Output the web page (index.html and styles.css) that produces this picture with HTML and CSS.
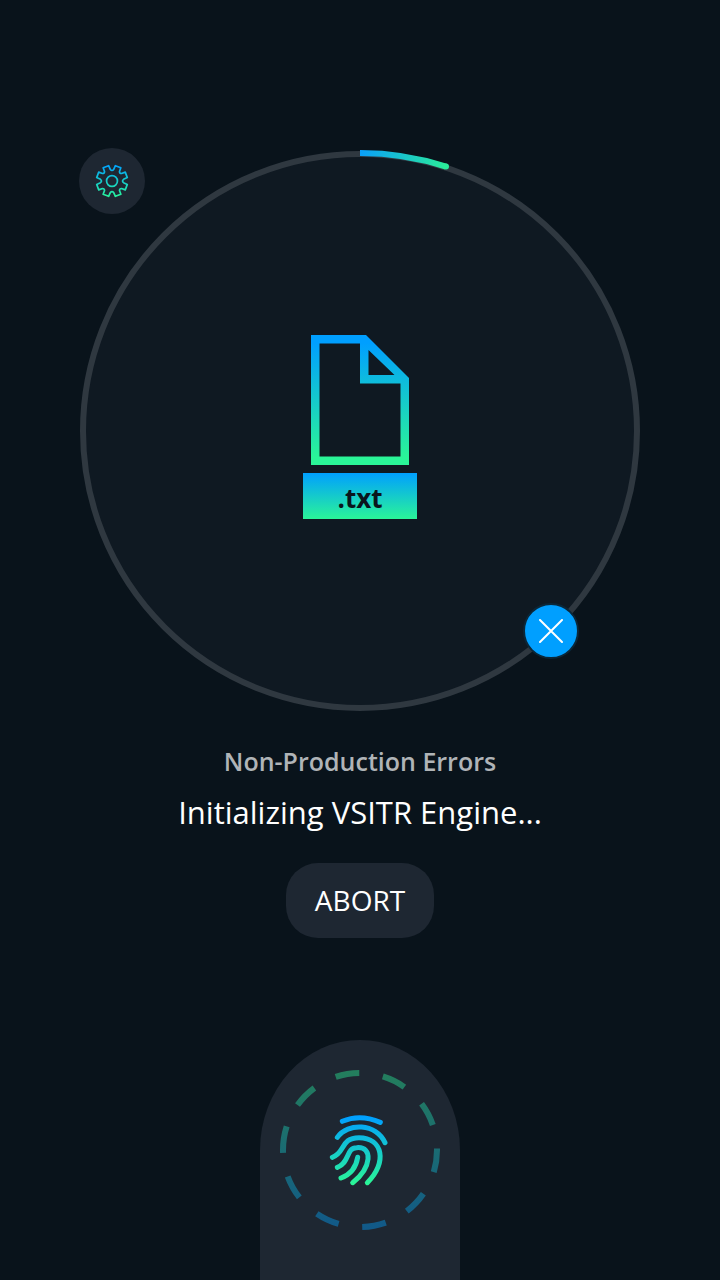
FILE: index.html
```html
<!DOCTYPE html>
<html lang="en">
<head>
<meta charset="utf-8">
<meta name="viewport" content="width=device-width, initial-scale=1">
<title>Non-Production Errors</title>
<link rel="stylesheet" href="styles.css">
</head>
<body>
<main class="screen">
  <section class="stage">
    <svg class="ring" viewBox="0 0 560 560" aria-hidden="true">
      <defs>
        <linearGradient id="arc" x1="280" y1="0" x2="366" y2="16" gradientUnits="userSpaceOnUse">
          <stop offset="0" stop-color="#0a9ffa"/><stop offset="1" stop-color="#2aec9a"/>
        </linearGradient>
      </defs>
      <circle cx="280" cy="280" r="277" fill="#0f1922" stroke="#2f3840" stroke-width="6"/>
      <path d="M280 2A278 278 0 0 1 366 15.6" fill="none" stroke="url(#arc)" stroke-width="6"/>
      <circle cx="366" cy="15.6" r="3" fill="#2aec9a"/>
    </svg>
    <div class="file">
      <svg class="file-icon" viewBox="0 0 98 130" aria-hidden="true">
        <defs>
          <linearGradient id="doc" x1="0" y1="8" x2="0" y2="122" gradientUnits="userSpaceOnUse">
            <stop offset="0" stop-color="#009fff"/><stop offset="1" stop-color="#2af598"/>
          </linearGradient>
        </defs>
        <path fill="url(#doc)" fill-rule="evenodd" d="M0 0H55L98 43V130H0ZM8.500 8.500V121.500H89.500V48.500H49V8.500ZM57.500 15V40H83.500Z"/>
      </svg>
      <span class="file-type">.txt</span>
    </div>
    <button class="settings" type="button" aria-label="Settings">
      <svg viewBox="0 0 100 100" width="34" height="34" aria-hidden="true">
        <defs>
          <linearGradient id="gear" x1="0" y1="0" x2="0" y2="100" gradientUnits="userSpaceOnUse">
            <stop offset="0" stop-color="#009fff"/><stop offset="1" stop-color="#2af598"/>
          </linearGradient>
        </defs>
        <g fill="none" stroke="url(#gear)" stroke-width="5" stroke-linejoin="round">
          <path d="M40 5L45 16Q50 22 55 16L60 5L76 11L72 22Q72 28 78 28L89 24L95 40L84 45Q78 50 84 55L95 60L89 76L78 72Q72 72 72 78L76 89L60 95L55 84Q50 78 45 84L40 95L24 89L28 78Q28 72 22 72L11 76L5 60L16 55Q22 50 16 45L5 40L11 24L22 28Q28 28 28 22L24 11Z"/>
          <circle cx="50" cy="50" r="16"/>
        </g>
      </svg>
    </button>
    <button class="remove" type="button" aria-label="Remove file">
      <svg viewBox="0 0 24 24" width="24" height="24" aria-hidden="true"><path d="M1 1L23 23M23 1L1 23" stroke="#fff" stroke-width="2" stroke-linecap="round"/></svg>
    </button>
  </section>
  <section class="status">
    <h1 class="title">Non-Production Errors</h1>
    <p class="message">Initializing VSITR Engine...</p>
    <button class="abort" type="button">ABORT</button>
  </section>
  <button class="dock" type="button" aria-label="Authenticate with fingerprint">
    <svg viewBox="0 0 160 160" width="160" height="160" aria-hidden="true">
      <defs>
        <linearGradient id="dash" x1="0" y1="3" x2="0" y2="157" gradientUnits="userSpaceOnUse">
          <stop offset="0" stop-color="#009fff"/><stop offset="1" stop-color="#2af598"/>
        </linearGradient>
        <linearGradient id="print" x1="0" y1="35" x2="0" y2="235" gradientUnits="userSpaceOnUse">
          <stop offset="0" stop-color="#009fff"/><stop offset="1" stop-color="#2af598"/>
        </linearGradient>
      </defs>
      <circle cx="80" cy="80" r="77" fill="none" stroke="url(#dash)" stroke-width="6" stroke-dasharray="24 24" opacity=".42" transform="rotate(180 80 80)"/>
      <g transform="translate(40 35) scale(.3333)" fill="none" stroke="url(#print)" stroke-width="15" stroke-linecap="round">
        <path d="M67 49Q120 26 181 52"/>
        <path d="M52 97C84 52 167 54 195 113"/>
        <path d="M37 157C76 145 61 98 117 98C189 98 203 173 142 233"/>
        <path d="M52 187C89 174 78 128 110 128C160 123 155 189 98 233"/>
        <path d="M63 219C89 209 108 190 113 157"/>
      </g>
    </svg>
  </button>
</main>
</body>
</html>
```
FILE: styles.css
```css
* { box-sizing: border-box; }

body {
  margin: 0;
  background: #09131b;
  color: #fff;
  font-family: "Open Sans", "Noto Sans", sans-serif;
}

button {
  padding: 0;
  border: 0;
  color: inherit;
  font: inherit;
  cursor: pointer;
}

svg { display: block; }

.screen {
  display: flex;
  flex-direction: column;
  align-items: center;
  min-height: 100vh;
  padding-top: 151px;
}

.stage {
  position: relative;
  display: grid;
  place-items: center;
  width: 78%;
  max-width: 560px;
}

.ring {
  grid-area: 1 / 1;
  width: 100%;
  overflow: visible;
}

.file {
  grid-area: 1 / 1;
  display: flex;
  flex-direction: column;
  align-items: center;
  gap: 8px;
  padding-bottom: 8px;
}

.file-icon { width: 98px; }

.file-type {
  padding: 4px 34px 0;
  background: linear-gradient(#009fff, #2af598);
  color: #0a151d;
  font-size: 26px;
  font-weight: 700;
  line-height: 42px;
}

.settings,
.remove {
  position: absolute;
  display: grid;
  place-items: center;
  border-radius: 50%;
}

.settings {
  top: -3px;
  left: -1px;
  width: 66px;
  height: 66px;
  background: #1e2732;
}

.remove {
  right: 61px;
  bottom: 52px;
  width: 56px;
  height: 56px;
  border: 2px solid #0b2739;
  background: #009fff;
}

.status {
  display: flex;
  flex-direction: column;
  align-items: center;
  padding: 32px 16px;
  text-align: center;
}

.title {
  margin: 0;
  color: #b0b4b7;
  font-size: 25px;
  font-weight: 600;
  line-height: 36px;
}

.message {
  margin: 10px 0 28px;
  font-size: 31px;
  line-height: 46px;
}

.abort {
  padding: 0 29px;
  border-radius: 32px;
  background: #1e2732;
  font-size: 28px;
  line-height: 75px;
}

.dock {
  display: flex;
  justify-content: center;
  width: 200px;
  height: 240px;
  margin-top: auto;
  padding-top: 30px;
  border-radius: 100px 100px 0 0 / 110px 110px 0 0;
  background: #1e2732;
}
```
